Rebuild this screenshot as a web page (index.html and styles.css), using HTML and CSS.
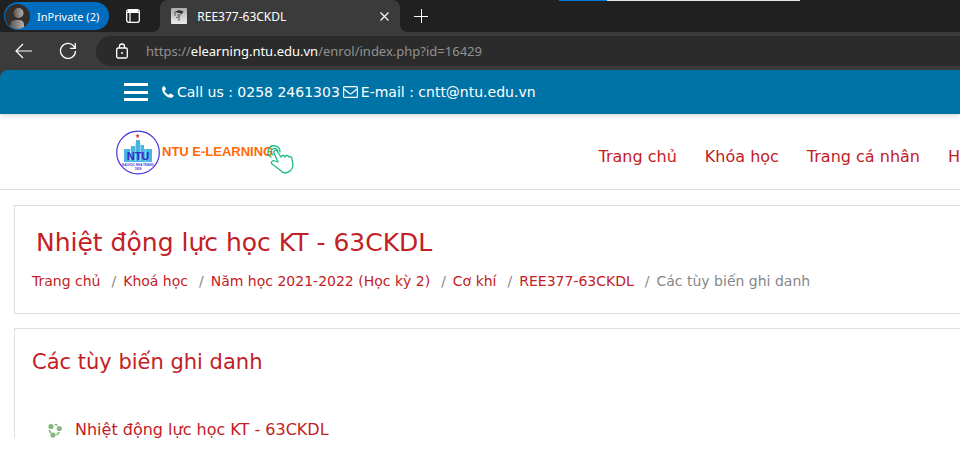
FILE: index.html
```html
<!DOCTYPE html>
<html lang="vi">
<head>
<meta charset="utf-8">
<meta name="viewport" content="width=device-width, initial-scale=1">
<title>REE377-63CKDL</title>
<link rel="stylesheet" href="styles.css">
</head>
<body>
<div class="window">
  <div class="tabstrip">
    <span class="load-line"></span>
    <button class="profile" type="button">
      <svg class="avatar" viewBox="0 0 25 25" aria-hidden="true">
        <defs><linearGradient id="shade"><stop offset="0" stop-color="#5c5652"/><stop offset="1" stop-color="#b5afab"/></linearGradient>
        <clipPath id="round"><circle cx="12.500" cy="12.500" r="12.500"/></clipPath></defs>
        <circle cx="12.500" cy="12.500" r="12.500" fill="#332e2b"/>
        <g clip-path="url(#round)" fill="url(#shade)"><circle cx="13.500" cy="9" r="5"/><path d="M5 25v-3q0-6 6-6h3q5 0 5 5v4z"/></g>
      </svg>
      InPrivate (2)
    </button>
    <button class="plain tab-actions" type="button" aria-label="Tab actions">
      <svg width="14" height="14" viewBox="0 0 14 14" fill="none" stroke="#fff"><rect x=".7" y=".7" width="12.600" height="12.600" rx="2" stroke-width="1.300"/><path d="M1 3.500h12M4 4v9" stroke-width="1.200"/><path d="M2 2h10" stroke-width="2"/></svg>
    </button>
    <div class="tab">
      <svg class="favicon" viewBox="0 0 16 16" aria-hidden="true">
        <defs><linearGradient id="fav" x2="0" y2="1"><stop offset="0" stop-color="#aaa"/><stop offset="1" stop-color="#eee"/></linearGradient></defs>
        <rect width="16" height="16" rx="1" fill="url(#fav)"/>
        <path d="M3.500 4 8 2l4.500 1.500L11 6 8 5z" fill="#333"/><path d="M6 6l4 .5L9 9H7z" fill="#777"/><path d="M4 4v4M8 9v4M5 9l2 1" stroke="#555" fill="none"/>
      </svg>
      <span class="tab-title">REE377-63CKDL</span>
      <button class="plain close" type="button" aria-label="Close tab"><svg width="9" height="9" viewBox="0 0 9 9" stroke="#fff" stroke-width="1.100"><path d="m.5.5 8 8m0-8-8 8"/></svg></button>
    </div>
    <button class="plain new-tab" type="button" aria-label="New tab"><svg width="14" height="14" viewBox="0 0 14 14" stroke="#fff"><path d="M7.500 0v14M0 7.500h14"/></svg></button>
  </div>
  <div class="toolbar">
    <button class="plain" type="button" aria-label="Back"><svg width="17" height="16" viewBox="0 0 17 16" fill="none" stroke="#fff" stroke-width="1.200"><path d="M8 1 1 8l7 7M1 8h16"/></svg></button>
    <button class="plain" type="button" aria-label="Refresh"><svg width="18" height="18" viewBox="0 0 18 18" fill="none" stroke="#fff" stroke-width="1.300"><path d="M16.500 9a7.500 7.500 0 1 1-2-5.200L16 6M16.300 1v5.300H11"/></svg></button>
    <div class="address">
      <svg width="12" height="16" viewBox="0 0 12 16" fill="none" stroke="#fff" stroke-width="1.300" aria-hidden="true"><rect x=".7" y="5" width="10.600" height="10" rx="1.500"/><path d="M3.500 5V3.500a2.500 2.500 0 0 1 5 0V5"/><circle cx="6" cy="10" r="1" fill="#fff" stroke="none"/></svg>
      <span class="url">https://<b>elearning.ntu.edu.vn</b>/enrol/index.php?id=16429</span>
    </div>
  </div>

  <div class="page">
    <div class="contact">
      <button class="plain menu" type="button" aria-label="Menu"><i></i><i></i><i></i></button>
      <span class="contact-item"><svg width="12" height="12" viewBox="0 0 12 12" fill="#fff" aria-hidden="true"><path d="M.3 1.800C.6.700 1.600.300 2.500.300c.5 0 1.400 2.600 1.400 3 0 .7-1.300 1.200-1.300 1.800 0 .8 3 3.700 3.800 3.700.6 0 1.300-1.400 1.800-1.400.4 0 3.400 1.500 3.400 2 0 1-.6 1.800-1.600 2.100-2.200.8-5.100-.7-7.200-2.800C.9 6.800-.3 3.800.3 1.800z"/></svg>Call us : 0258 2461303</span>
      <span class="contact-item"><svg width="15" height="12" viewBox="0 0 15 12" fill="none" stroke="#fff" stroke-width="1.200" aria-hidden="true"><rect x=".6" y=".6" width="13.800" height="10.800" rx="1"/><path d="m1 3 5.500 4.500q1 .7 2 0L14 3"/></svg>E-mail : cntt@ntu.edu.vn</span>
    </div>
    <header class="site-header">
      <a class="brand" href="#" aria-label="NTU E-Learning">
        <svg width="179" height="46" viewBox="0 0 179 46" aria-hidden="true">
          <circle cx="22" cy="23.500" r="21.300" fill="#fff" stroke="#4435dc" stroke-width="1.200"/>
          <path d="M8 20h6v4h1v-7h5v-6h4v5h4v4h4v2h-1v-2h5v13H8z" fill="#48b5e2"/>
          <path d="M14.500 19v13M19.500 14v18M24.500 14v18M29.500 20v12" stroke="#a8e0f3" stroke-width=".8"/>
          <path d="m21.600 4.500.6 1.700h1.700l-1.400 1 .5 1.700-1.400-1-1.400 1 .5-1.700-1.400-1h1.700z" fill="#e51f2d"/>
          <text class="seal" x="22" y="31" text-anchor="middle">NTU</text>
          <text class="seal-small" x="22" y="37" text-anchor="middle">ĐẠI HỌC NHA TRANG</text>
          <text class="seal-small" x="22" y="41" text-anchor="middle">1959</text>
          <text class="brand-name" x="46" y="27">NTU E-LEARNING</text>
          <g fill="none" stroke="#17bd80" stroke-width="1.300" stroke-linecap="round" stroke-linejoin="round">
            <path d="M155 28a6 6 0 1 1 9-5M157 26a3.500 3.500 0 1 1 5-4"/>
            <path d="m162 33-4-9c-1-2 2-4 3-2l4 6c1-2 3-2 4 0 1-2 3-2 4 0 1-1 3 0 3 2l1 6c0 4-4 8-8 8-2 0-4-2-5-3l-8-6c-2-2 1-4 3-3z"/>
          </g>
        </svg>
      </a>
      <nav class="nav"><a href="#">Trang chủ</a><a href="#">Khóa học</a><a href="#">Trang cá nhân</a><a href="#">H</a></nav>
    </header>
    <main class="content">
      <section class="panel heading-panel">
        <h1>Nhiệt động lực học KT - 63CKDL</h1>
        <ol class="crumbs"><li><a href="#">Trang chủ</a></li><li><a href="#">Khoá học</a></li><li><a href="#">Năm học 2021-2022 (Học kỳ 2)</a></li><li><a href="#">Cơ khí</a></li><li><a href="#">REE377-63CKDL</a></li><li>Các tùy biến ghi danh</li></ol>
      </section>
      <section class="panel enrol-panel">
        <h2>Các tùy biến ghi danh</h2>
        <a class="course" href="#"><svg width="14" height="15" viewBox="0 0 14 15" aria-hidden="true"><g fill="#86b77c"><circle cx="3" cy="3.500" r="2.600"/><circle cx="11.300" cy="5.500" r="2.600"/><circle cx="5" cy="12" r="2.600"/></g><path d="M6.500 1.500q2 0 3 1M1.500 7q0 2 1.500 3M11 9q-.5 2-2.500 3" fill="none" stroke="#86b77c" stroke-width="1.700"/></svg>Nhiệt động lực học KT - 63CKDL</a>
      </section>
    </main>
  </div>
</div>
</body>
</html>
```
FILE: styles.css
```css
* { box-sizing: border-box; }
body { margin: 0; background: #fff; font-family: "DejaVu Sans", sans-serif; color: #868686; }
a { color: #c32026; text-decoration: none; }
svg { display: block; flex: none; }
button { border: 0; font: inherit; }

.window { display: flex; flex-direction: column; height: 100vh; padding-bottom: 22px; overflow: hidden; }
.plain { display: flex; align-items: center; justify-content: center; padding: 0; background: none; color: #fff; }

.tabstrip { position: relative; flex: none; display: flex; align-items: center; height: 32px; padding-left: 4px; background: #202020; color: #fff; font: 12px "Noto Sans", sans-serif; }
.load-line { position: absolute; top: 0; left: 559px; width: 241px; height: 1px; background: linear-gradient(90deg, #0078d7 48px, #e6e6e6 48px); }
.profile { display: flex; align-items: center; gap: 7px; height: 28px; padding: 0 10px 0 1px; border-radius: 14px; background: #006cbe; color: #fff; font-size: 11px; white-space: nowrap; }
.avatar { width: 25px; height: 25px; }
.tab-actions { width: 48px; }
.tab { position: relative; display: flex; align-items: center; width: 240px; height: 32px; margin-left: 3px; padding: 0 10px 0 11px; border-radius: 8px 8px 0 0; background: #3b3b3b; }
.tab::before, .tab::after { content: ""; position: absolute; bottom: 0; width: 8px; height: 8px; }
.tab::before { right: 100%; background: radial-gradient(circle at 0 0, #202020 8px, #3b3b3b 8px); }
.tab::after { left: 100%; background: radial-gradient(circle at 100% 0, #202020 8px, #3b3b3b 8px); }
.favicon { width: 16px; height: 16px; }
.tab-title { flex: 1; margin-left: 10px; }
.close { width: 12px; }
.new-tab { width: 42px; }

.toolbar { flex: none; display: flex; align-items: center; height: 38px; padding-left: 15px; gap: 27px; background: #3b3b3b; }
.address { flex: 1; display: flex; align-items: center; gap: 18px; height: 30px; margin-left: -8px; padding-left: 20px; border-radius: 15px 0 0 15px; background: #2b2b2b; }
.url { color: #919191; font: 13px "Noto Sans", sans-serif; }
.url b { color: #fff; font-weight: 400; }

.page { flex: 1; min-height: 0; overflow: hidden; background: linear-gradient(#3b3b3b 10px, #fff 10px); }
.contact { position: relative; display: flex; align-items: center; gap: 3px; height: 44px; padding-left: 124px; border-radius: 8px 0 0 0; background: #0073a6; box-shadow: 0 1px 4px #0003; color: #fff; font-size: 14px; }
.menu { flex-direction: column; justify-content: space-between; width: 24px; height: 18px; margin-right: 11px; }
.menu i { width: 100%; height: 3px; background: #fff; }
.contact-item { display: flex; align-items: center; gap: 3px; white-space: nowrap; }

.site-header { display: flex; align-items: center; justify-content: space-between; height: 76px; padding-left: 116px; border-bottom: 1px solid #dedede; }
.brand { flex: none; }
.seal { fill: #3328c8; font: bold 11px "Liberation Sans", sans-serif; }
.seal-small { fill: #4435dc; font: bold 3px "Liberation Sans", sans-serif; }
.brand-name { fill: #ff6a08; font: bold 13px "Liberation Sans", sans-serif; }
.nav { display: flex; gap: 28px; margin-top: 10px; white-space: nowrap; font-size: 16px; }

.content { display: grid; gap: 14px; padding: 15px 0 0 14px; }
.panel { border: 1px solid #dedede; border-right: 0; }
.heading-panel { height: 109px; padding: 22px 0 0 17px; }
h1, h2 { margin: 0; color: #c32026; font-weight: 400; }
h1 { padding-left: 4px; font-size: 25px; line-height: 30px; }
.crumbs { display: flex; margin: 13px 0 0; padding: 0; list-style: none; font-size: 14px; line-height: 20px; white-space: nowrap; }
.crumbs li + li::before { content: "/"; padding: 0 7px 0 11px; }
.enrol-panel { height: 180px; padding: 19px 0 0 17px; }
h2 { font-size: 21px; line-height: 28px; }
.course { display: flex; align-items: center; gap: 13px; margin: 42px 0 0 16px; font-size: 16px; line-height: 24px; }
```
